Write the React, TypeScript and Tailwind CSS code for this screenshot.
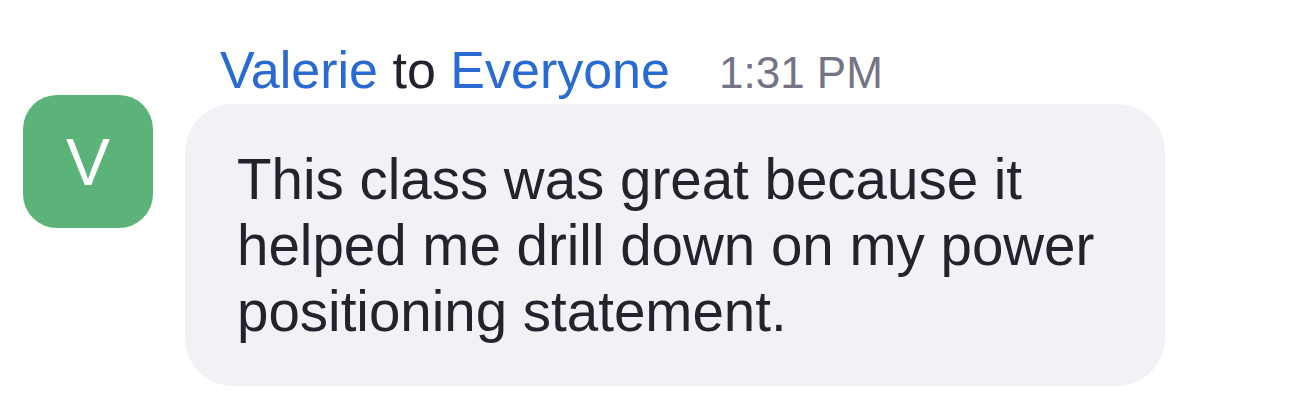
export default function App() {
  return (
    <div
      className="w-[1301px] h-[418px] bg-white overflow-hidden"
      style={{ fontFamily: '"Liberation Sans", Arial, sans-serif' }}
    >
      <div className="flex items-start pl-[23px] pt-[44px]">
        <div className="mt-[51px] w-[130px] h-[133px] shrink-0 rounded-[34px] bg-[#5bb37a] flex items-center justify-center">
          <span className="text-white text-[66px] leading-none">V</span>
        </div>
        <div className="ml-[32px]">
          <div className="flex items-baseline pl-[35px] h-[51px] leading-none">
            <span className="text-[52px] text-[#2a6bd1]">Valerie</span>
            <span className="text-[52px] text-[#23232e]">&nbsp;to&nbsp;</span>
            <span className="text-[52px] text-[#2a6bd1]">Everyone</span>
            <span className="ml-[49px] text-[44px] text-[#747487]">1:31 PM</span>
          </div>
          <div className="mt-[9px] w-[980px] rounded-[48px] bg-[#f1f1f6] pl-[52px] pr-[40px] pt-[43px] pb-[41px]">
            <p className="text-[56.5px] leading-[66px] text-[#23232e]">
              This class was great because it
              <br />
              helped me drill down on my power
              <br />
              positioning statement.
            </p>
          </div>
        </div>
      </div>
    </div>
  );
}
